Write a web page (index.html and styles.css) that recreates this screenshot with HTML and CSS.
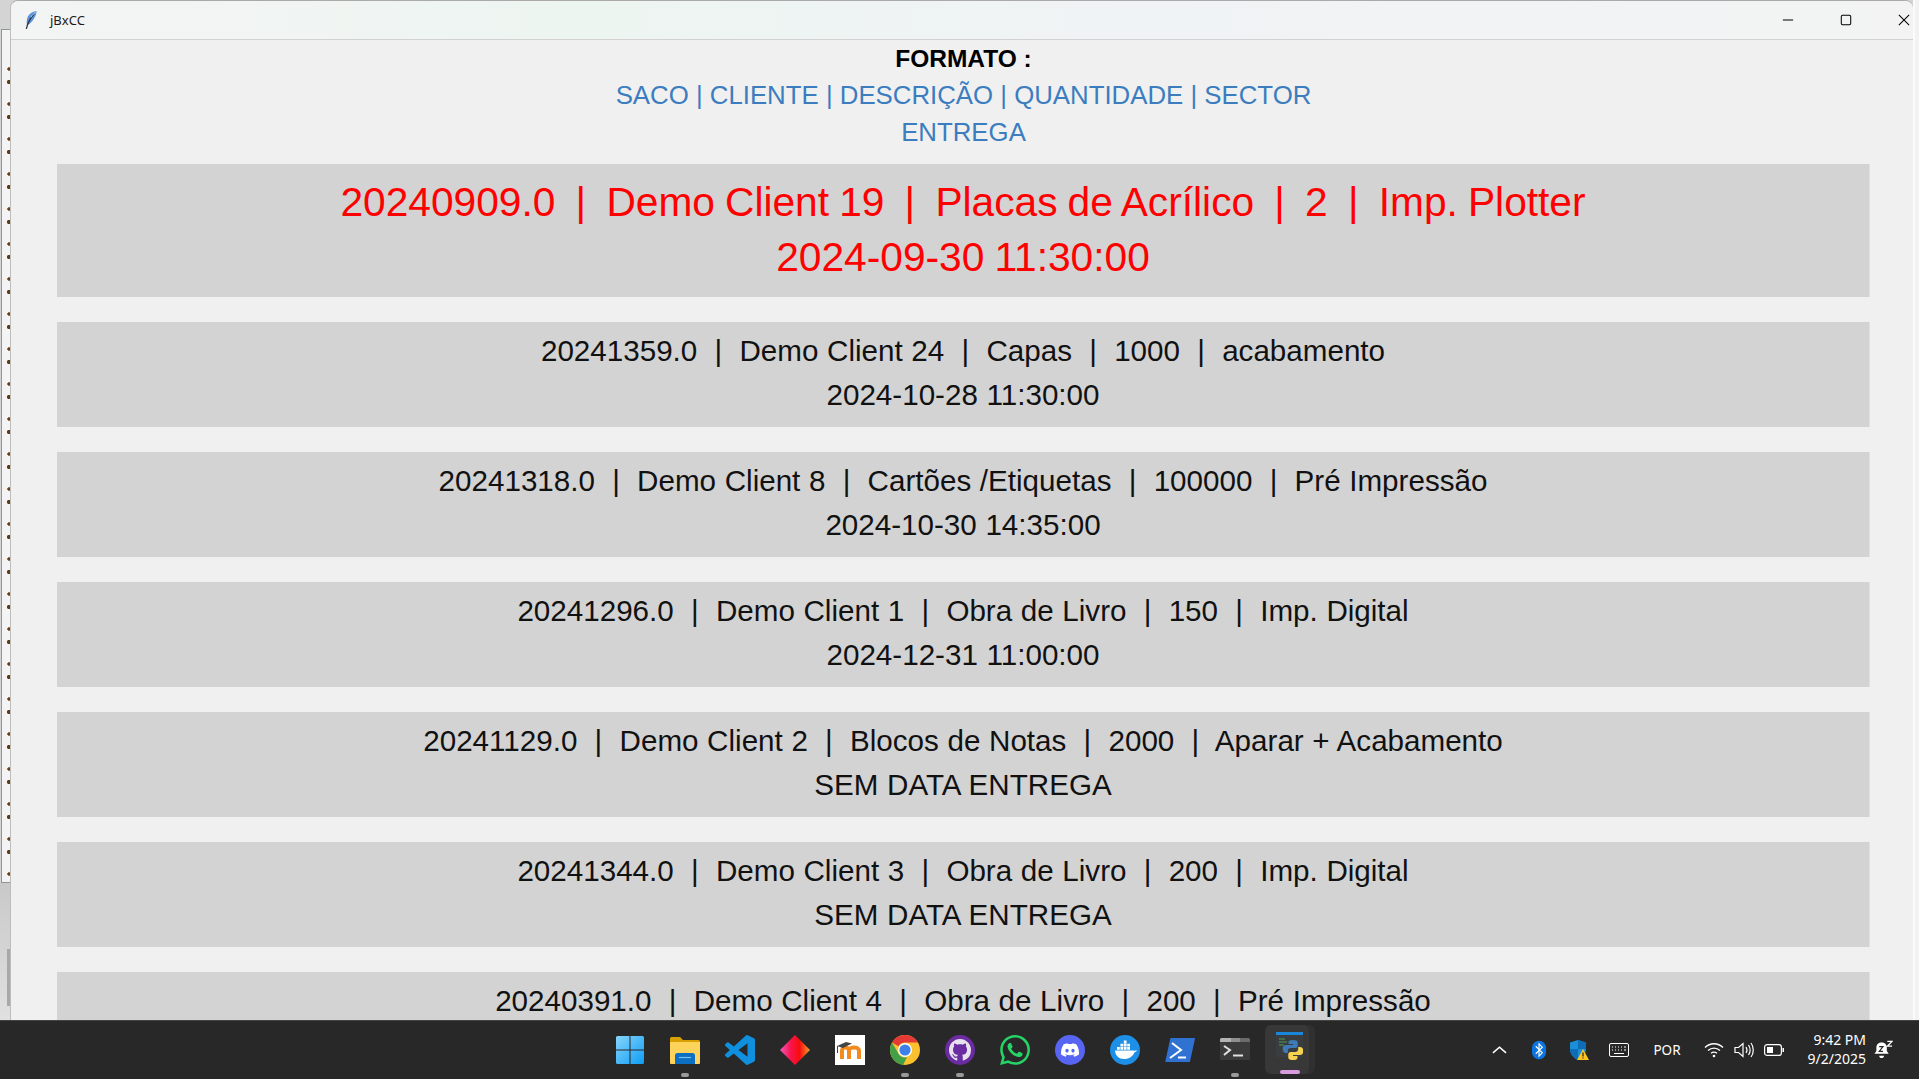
FILE: index.html
```html
<!DOCTYPE html>
<html lang="en">
<head>
    <meta charset="UTF-8">
    <meta name="viewport" content="width=device-width, initial-scale=1.0">
    <title>jBxCC</title>
    <link rel="stylesheet" href="styles.css">
</head>
<body>
    <div class="desktop">
        <div class="behind">
            <div class="behind-list"><div class="behind-dots"></div></div>
            <div class="behind-rest"><div class="behind-scroll"></div></div>
        </div>

        <div class="window">
            <div class="titlebar">
                <div class="title-left">
                    <svg class="feather" viewBox="0 0 14 20">
                        <path d="M13.500 .5C9.500 .5 5 3 3.500 8c-.8 3-.8 5-.3 7.500 3-1 6-4 7.800-7.500 1.500-2.500 2.500-5 2.500-7.500z" fill="#5b93dc"/>
                        <path d="M11 3.500C8 6.500 4.500 11 2.500 19.500" stroke="#2b3447" stroke-width="1.400" fill="none"/>
                        <path d="M12.500 2c-2 1-4 3-5 5" stroke="#b7d4f5" stroke-width="1" fill="none"/>
                    </svg>
                    <span class="title-text">jBxCC</span>
                </div>
                <div class="title-buttons">
                    <div class="title-btn"><svg viewBox="0 0 14 14"><path d="M1 7h12" stroke="#000" stroke-width="1.200" fill="none"/></svg></div>
                    <div class="title-btn"><svg viewBox="0 0 14 14"><rect x="1.500" y="1.500" width="11" height="11" rx="1.500" stroke="#000" stroke-width="1.200" fill="none"/></svg></div>
                    <div class="title-btn"><svg viewBox="0 0 14 14"><path d="M1 1l12 12M13 1L1 13" stroke="#000" stroke-width="1.200" fill="none"/></svg></div>
                </div>
            </div>

            <div class="content">
                <div class="format">
                    <div class="format-title">FORMATO :</div>
                    <div class="format-fields">SACO | CLIENTE | DESCRIÇÃO | QUANTIDADE | SECTOR</div>
                    <div class="format-fields">ENTREGA</div>
                </div>

                <div class="jobs">
                    <div class="job job-urgent">
                        <div>20240909.0  |  Demo Client 19  |  Placas de Acrílico  |  2  |  Imp. Plotter</div>
                        <div>2024-09-30 11:30:00</div>
                    </div>
                    <div class="job">
                        <div>20241359.0  |  Demo Client 24  |  Capas  |  1000  |  acabamento</div>
                        <div>2024-10-28 11:30:00</div>
                    </div>
                    <div class="job">
                        <div>20241318.0  |  Demo Client 8  |  Cartões /Etiquetas  |  100000  |  Pré Impressão</div>
                        <div>2024-10-30 14:35:00</div>
                    </div>
                    <div class="job">
                        <div>20241296.0  |  Demo Client 1  |  Obra de Livro  |  150  |  Imp. Digital</div>
                        <div>2024-12-31 11:00:00</div>
                    </div>
                    <div class="job">
                        <div>20241129.0  |  Demo Client 2  |  Blocos de Notas  |  2000  |  Aparar + Acabamento</div>
                        <div>SEM DATA ENTREGA</div>
                    </div>
                    <div class="job">
                        <div>20241344.0  |  Demo Client 3  |  Obra de Livro  |  200  |  Imp. Digital</div>
                        <div>SEM DATA ENTREGA</div>
                    </div>
                    <div class="job">
                        <div>20240391.0  |  Demo Client 4  |  Obra de Livro  |  200  |  Pré Impressão</div>
                    </div>
                </div>
            </div>
        </div>

        <div class="edge"></div>
    </div>

    <div class="taskbar">
        <div class="task-spacer"></div>
        <div class="task-icons">
            <!-- start -->
            <div class="task-icon">
                <svg viewBox="0 0 30 30">
                    <defs>
                        <linearGradient id="winBlue" x1="0" y1="0" x2="1" y2="1"><stop offset="0" stop-color="#86d6fb"/><stop offset="1" stop-color="#0f9cf5"/></linearGradient>
                    </defs>
                    <path d="M1 2.500A1.500 1.500 0 0 1 2.500 1H14.500V14.500H1zM15.500 1H27.500A1.500 1.500 0 0 1 29 2.500V14.500H15.500zM1 15.500H14.500V29H2.500A1.500 1.500 0 0 1 1 27.500zM15.500 15.500H29V27.500A1.500 1.500 0 0 1 27.500 29H15.500z" fill="url(#winBlue)"/>
                </svg>
            </div>
            <!-- explorer -->
            <div class="task-icon running">
                <svg viewBox="0 0 30 30">
                    <path d="M0 3.500A1.500 1.500 0 0 1 1.500 2H10l3 3h15.500A1.500 1.500 0 0 1 30 6.500V10H0z" fill="#d9a100"/>
                    <path d="M0 7h30v21a1 1 0 0 1-1 1H1a1 1 0 0 1-1-1z" fill="#fdd35c"/>
                    <path d="M5 20.500A2.500 2.500 0 0 1 7.500 18h15a2.500 2.500 0 0 1 2.500 2.500V29H5z" fill="#0c6fc4"/>
                    <path d="M9 22.500h12" stroke="#7cc0f2" stroke-width="1.200"/>
                </svg>
            </div>
            <!-- vscode -->
            <div class="task-icon">
                <svg viewBox="0 0 24 24">
                    <path d="M23.150 2.587L18.210.21a1.494 1.494 0 0 0-1.705.29l-9.460 8.630-4.120-3.128a.999.999 0 0 0-1.276.057L.327 7.261A1 1 0 0 0 .326 8.740L3.899 12 .326 15.260a1 1 0 0 0 .001 1.479L1.650 17.940a.999.999 0 0 0 1.276.057l4.120-3.128 9.460 8.630a1.492 1.492 0 0 0 1.704.29l4.942-2.377A1.500 1.500 0 0 0 24 20.060V3.939a1.500 1.500 0 0 0-.85-1.352zm-5.146 14.861L10.826 12l7.178-5.448v10.896z" fill="#0f8fdd"/>
                </svg>
            </div>
            <!-- diamond app -->
            <div class="task-icon">
                <svg viewBox="0 0 30 30">
                    <defs>
                        <linearGradient id="gem" x1="0" y1="0" x2="1" y2="0"><stop offset="0" stop-color="#f45bc0"/><stop offset=".35" stop-color="#f7144e"/><stop offset=".65" stop-color="#f90d0d"/><stop offset="1" stop-color="#f5a030"/></linearGradient>
                    </defs>
                    <path d="M15 0l15 15-15 15L0 15z" fill="url(#gem)"/>
                </svg>
            </div>
            <!-- moodle -->
            <div class="task-icon">
                <svg viewBox="0 0 30 30">
                    <rect width="30" height="30" fill="#fff"/>
                    <path d="M7 24V15.500c0-4 7-4 7 0V24M14 15.500c0-4 10-4 10 0V24" stroke="#f28a1e" stroke-width="4" fill="none"/>
                    <path d="M2 11l9-4 6 1.500-9 4.500z" fill="#444"/>
                    <path d="M2.500 11v7" stroke="#444"/>
                </svg>
            </div>
            <!-- chrome -->
            <div class="task-icon running">
                <svg viewBox="0 0 30 30">
                    <circle cx="15" cy="15" r="15" fill="#fbc02d"/>
                    <path d="M15 0a15 15 0 0 1 13 7.500H15a7.500 7.500 0 0 0-6.500 3.750L2 7.500A15 15 0 0 1 15 0z" fill="#e53935"/>
                    <path d="M2 7.500L8.500 18.750A7.500 7.500 0 0 0 17 22.200L13 29.900A15 15 0 0 1 2 7.500z" fill="#43a047"/>
                    <circle cx="15" cy="15" r="7" fill="#fff"/>
                    <circle cx="15" cy="15" r="5.600" fill="#3f7fe8"/>
                </svg>
            </div>
            <!-- github desktop -->
            <div class="task-icon running">
                <svg viewBox="0 0 30 30">
                    <circle cx="15" cy="15" r="15" fill="#6a2ca0"/>
                    <svg x="4" y="4" width="22" height="22" viewBox="0 0 16 16">
                        <path d="M8 0C3.580 0 0 3.580 0 8c0 3.540 2.290 6.530 5.470 7.590.4.070.55-.17.55-.38 0-.19-.01-.82-.01-1.490-2.010.37-2.530-.49-2.690-.94-.09-.23-.48-.94-.82-1.130-.28-.15-.68-.52-.01-.53.63-.01 1.080.58 1.230.82.720 1.210 1.870.87 2.330.66.070-.52.280-.87.510-1.070-1.780-.2-3.640-.89-3.640-3.950 0-.87.310-1.590.820-2.150-.08-.2-.36-1.020.080-2.120 0 0 .67-.21 2.200.82.640-.18 1.320-.27 2-.27.680 0 1.360.09 2 .27 1.530-1.040 2.200-.82 2.200-.82.440 1.100.160 1.920.080 2.120.510.560.820 1.270.820 2.150 0 3.070-1.870 3.750-3.650 3.950.290.250.540.730.540 1.480 0 1.070-.01 1.930-.01 2.200 0 .21.150.46.550.38A8.013 8.013 0 0 0 16 8c0-4.420-3.580-8-8-8z" fill="#e8e2ee"/>
                    </svg>
                </svg>
            </div>
            <!-- whatsapp -->
            <div class="task-icon">
                <svg viewBox="0 0 24 24">
                    <path d="M17.472 14.382c-.297-.149-1.758-.867-2.030-.967-.273-.099-.471-.148-.67.150-.197.297-.767.966-.94 1.164-.173.199-.347.223-.644.075-.297-.15-1.255-.463-2.390-1.475-.883-.788-1.480-1.761-1.653-2.059-.173-.297-.018-.458.130-.606.134-.133.298-.347.446-.52.149-.174.198-.298.298-.497.099-.198.050-.371-.025-.52-.075-.149-.669-1.612-.916-2.207-.242-.579-.487-.5-.669-.51-.173-.008-.371-.01-.57-.01-.198 0-.52.074-.792.372-.272.297-1.040 1.016-1.040 2.479 0 1.462 1.065 2.875 1.213 3.074.149.198 2.096 3.200 5.077 4.487.709.306 1.262.489 1.694.625.712.227 1.360.195 1.871.118.571-.085 1.758-.719 2.006-1.413.248-.694.248-1.289.173-1.413-.074-.124-.272-.198-.57-.347m-5.421 7.403h-.004a9.870 9.870 0 0 1-5.031-1.378l-.361-.214-3.741.982.998-3.648-.235-.374a9.860 9.860 0 0 1-1.510-5.260c.001-5.450 4.436-9.884 9.888-9.884 2.640 0 5.122 1.030 6.988 2.898a9.825 9.825 0 0 1 2.893 6.994c-.003 5.450-4.437 9.884-9.885 9.884m8.413-18.297A11.815 11.815 0 0 0 12.050 0C5.495 0 .16 5.335.157 11.892c0 2.096.547 4.142 1.588 5.945L.057 24l6.305-1.654a11.882 11.882 0 0 0 5.683 1.448h.005c6.554 0 11.890-5.335 11.893-11.893a11.821 11.821 0 0 0-3.480-8.413z" fill="#25d366"/>
                </svg>
            </div>
            <!-- discord -->
            <div class="task-icon">
                <svg viewBox="0 0 30 30">
                    <circle cx="15" cy="15" r="15" fill="#5865f2"/>
                    <svg x="6" y="6" width="18" height="18" viewBox="0 0 24 24">
                        <path d="M20.317 4.370a19.791 19.791 0 0 0-4.885-1.515.074.074 0 0 0-.079.037c-.21.375-.444.864-.608 1.250a18.270 18.270 0 0 0-5.487 0 12.640 12.640 0 0 0-.617-1.250.077.077 0 0 0-.079-.037A19.736 19.736 0 0 0 3.677 4.370a.07.07 0 0 0-.032.027C.533 9.046-.32 13.580.099 18.057a.082.082 0 0 0 .031.057 19.900 19.900 0 0 0 5.993 3.030.078.078 0 0 0 .084-.028c.462-.63.874-1.295 1.226-1.994a.076.076 0 0 0-.041-.106 13.107 13.107 0 0 1-1.872-.892.077.077 0 0 1-.008-.128 10.200 10.200 0 0 0 .372-.292.074.074 0 0 1 .077-.01c3.928 1.793 8.180 1.793 12.062 0a.074.074 0 0 1 .078.01c.12.098.246.198.373.292a.077.077 0 0 1-.006.127 12.299 12.299 0 0 1-1.873.892.077.077 0 0 0-.041.107c.36.698.772 1.362 1.225 1.993a.076.076 0 0 0 .084.028 19.839 19.839 0 0 0 6.002-3.030.077.077 0 0 0 .032-.054c.5-5.177-.838-9.674-3.549-13.660a.061.061 0 0 0-.031-.03zM8.020 15.330c-1.183 0-2.157-1.085-2.157-2.419 0-1.333.956-2.419 2.157-2.419 1.210 0 2.176 1.096 2.157 2.420 0 1.333-.956 2.418-2.157 2.418zm7.975 0c-1.183 0-2.157-1.085-2.157-2.419 0-1.333.955-2.419 2.157-2.419 1.210 0 2.176 1.096 2.157 2.420 0 1.333-.946 2.418-2.157 2.418z" fill="#fff"/>
                    </svg>
                </svg>
            </div>
            <!-- docker -->
            <div class="task-icon">
                <svg viewBox="0 0 30 30">
                    <circle cx="15" cy="15" r="15" fill="#1d8fe6"/>
                    <path d="M5 15.500h18.500c1 .5 2.500.3 3.500-.5-.3 1-1.300 2-2.500 2.200C23 21 19.500 24 14 24c-5 0-8.500-3-9-8.500z" fill="#fff"/>
                    <path d="M7 12h2.800v2.800H7zM10.400 12h2.800v2.800h-2.800zM13.800 12h2.800v2.800h-2.800zM17.200 12H20v2.800h-2.800zM10.400 8.800h2.800v2.800h-2.800zM13.800 8.800h2.800v2.800h-2.800zM17.200 8.800H20v2.800h-2.800zM13.800 5.600h2.800v2.800h-2.800z" fill="#fff"/>
                </svg>
            </div>
            <!-- powershell -->
            <div class="task-icon">
                <svg viewBox="0 0 30 30">
                    <path d="M6 3h23.500a.5.500 0 0 1 .5.6L25 26.500a.8.800 0 0 1-.8.5H.8a.5.500 0 0 1-.5-.6L5.300 3.500A.8.800 0 0 1 6 3z" fill="#2f72d2"/>
                    <path d="M7 8l9 7-11 8" stroke="#fff" stroke-width="2" fill="none"/>
                    <path d="M13 22.500h8" stroke="#fff" stroke-width="2"/>
                </svg>
            </div>
            <!-- terminal -->
            <div class="task-icon running">
                <svg viewBox="0 0 30 30">
                    <rect y="3" width="30" height="22" rx="1.500" fill="#3b3b3b"/>
                    <path d="M0 4.500A1.500 1.500 0 0 1 1.500 3H11v4H0z" fill="#b4b4b4"/>
                    <rect x="11" y="3" width="9" height="4" fill="#8f8f8f"/>
                    <path d="M20 3h8.500A1.500 1.500 0 0 1 30 4.500V7H20z" fill="#6b6b6b"/>
                    <path d="M4 11l6 4-6 5" stroke="#e2e2e2" stroke-width="2" fill="none"/>
                    <path d="M13 20.500h10" stroke="#e2e2e2" stroke-width="2"/>
                </svg>
            </div>
            <!-- python, the active window -->
            <div class="task-icon active">
                <svg viewBox="0 0 27 28">
                    <rect width="27" height="25" fill="#3a3d40"/>
                    <rect width="27" height="3" fill="#1a86d8"/>
                    <path d="M3 7h6M3 10h8M3 13h5" stroke="#4c9a55"/>
                    <path d="M17 8c-3 0-4.500 .7-4.500 2.300V12H17v1H10c-2 0-3.300 1.300-3.300 3.800S8 21 10 21h1.800v-2.300c0-1.500 1.300-2.700 2.800-2.700h4.800c1.300 0 2.300-1 2.300-2.300v-3.400C21.700 8.700 19.800 8 17 8z" fill="#3c7bb5"/>
                    <path d="M17 28c3 0 4.500-.7 4.500-2.300V24H17v-1h7c2 0 3.300-1.300 3.300-3.800S26 15 24 15h-1.800v2.300c0 1.500-1.300 2.700-2.800 2.700h-4.800c-1.300 0-2.300 1-2.300 2.300v3.400C12.300 27.300 14.200 28 17 28z" fill="#f7d24f"/>
                </svg>
            </div>
        </div>

        <div class="tray">
            <div class="tray-item"><svg viewBox="0 0 16 10" class="tray-chevron"><path d="M1 8l7-6 7 6" stroke="#fff" stroke-width="1.600" fill="none"/></svg></div>
            <div class="tray-item">
                <svg viewBox="0 0 16 20" class="tray-bt">
                    <rect width="15" height="20" rx="7.500" fill="#0b74de"/>
                    <path d="M4 6l7 7-3.500 3.500v-13L11 7l-7 7" stroke="#fff" stroke-width="1.200" fill="none"/>
                </svg>
            </div>
            <div class="tray-item">
                <svg viewBox="0 0 20 20" class="tray-shield">
                    <path d="M9 0l8 2.500V9c0 5-3.500 9-8 11C4.500 18 1 14 1 9V2.500z" fill="#1a8fd8"/>
                    <path d="M9 0l8 2.500V9H9zM9 9v11C4.500 18 1 14 1 9z" fill="#0f6cb6"/>
                    <path d="M14 9l6 11H8z" fill="#fdc421"/>
                    <path d="M14 12.500v4M14 17.500v1" stroke="#222" stroke-width="1.200"/>
                </svg>
            </div>
            <div class="tray-item">
                <svg viewBox="0 0 20 14" class="tray-keyboard">
                    <rect x=".5" y=".5" width="19" height="13" rx="1.500" stroke="#fff" fill="none"/>
                    <path d="M3 4h1M6 4h1M9 4h1M12 4h1M15 4h2M3 7h1M6 7h1M9 7h1M12 7h1M15 7h2M5 10.500h10" stroke="#fff"/>
                </svg>
            </div>
            <div class="tray-lang">POR</div>
            <div class="tray-status">
                <svg viewBox="0 0 20 16" class="tray-small">
                    <path d="M1 5.500c5-5 13-5 18 0M4 8.500c3.500-3.200 8.500-3.200 12 0M7 11.300c1.800-1.400 4.200-1.400 6 0" stroke="#fff" stroke-width="1.300" fill="none"/>
                    <circle cx="10" cy="14" r="1.300" fill="#fff"/>
                </svg>
            </div>
            <div class="tray-status">
                <svg viewBox="0 0 20 16" class="tray-small">
                    <path d="M1 5.500h3.500L9 1.500v13l-4.500-4H1z" stroke="#fff" stroke-width="1.200" fill="none"/>
                    <path d="M12 5c1.200 1.800 1.200 4.200 0 6M14.500 3c2 3 2 7 0 10M17 1c3 4 3 10 0 14" stroke="#fff" stroke-width="1.200" fill="none"/>
                </svg>
            </div>
            <div class="tray-status">
                <svg viewBox="0 0 20 12" class="tray-small">
                    <rect x=".6" y=".6" width="16.800" height="10.800" rx="2.500" stroke="#fff" stroke-width="1.200" fill="none"/>
                    <rect x="3" y="3" width="6" height="6" fill="#fff"/>
                    <rect x="18.500" y="4" width="1.500" height="4" fill="#fff"/>
                </svg>
            </div>
            <div class="clock">
                <div>9:42 PM</div>
                <div>9/2/2025</div>
            </div>
            <div class="tray-item tray-bell-box">
                <svg viewBox="0 0 20 20" class="tray-bell">
                    <path d="M8 2c3 0 5.500 2 5.500 5.500V11l2 3H.5l2-3V7.500C2.500 4 5 2 8 2z" fill="#fff"/>
                    <path d="M5.500 16h5c0 1.500-1 2.500-2.500 2.500S5.500 17.500 5.500 16z" fill="#fff"/>
                    <path d="M5.500 6.500h4l-4 5h4" stroke="#262626" stroke-width="1.200" fill="none"/>
                    <path d="M14 1h5l-5 5h5" stroke="#fff" stroke-width="1.300" fill="none"/>
                </svg>
            </div>
        </div>
    </div>
</body>
</html>
```

FILE: styles.css
```css
* {
    box-sizing: border-box;
}
html, body {
    margin: 0;
    padding: 0;
    height: 100%;
    overflow: hidden;
}
body {
    font-family: 'Liberation Sans', Arial, sans-serif;
    display: flex;
    flex-direction: column;
    background-color: #d4d4d4;
}
.desktop {
    display: flex;
    height: 1020px;
    overflow: hidden;
}

/* the other window peeking out on the left */
.behind {
    width: 10px;
    display: flex;
    flex-direction: column;
    padding-top: 29px;
}
.behind-list {
    height: 854px;
    margin-left: 1px;
    border: 1px solid #8f959c;
    border-right: none;
    background-color: #f4f4f4;
    overflow: hidden;
}
.behind-dots {
    height: 100%;
    margin-top: 33px;
    background-image:
        radial-gradient(circle at 7px 6px, #6b3d10 1.4px, transparent 2px),
        radial-gradient(circle at 7px 19px, #5f3a12 1.8px, transparent 2.4px);
    background-size: 9px 35px;
}
.behind-rest {
    flex: 1;
    padding: 66px 0 0 7px;
    background: linear-gradient(#c9c9c9, #e0e0e0);
}
.behind-scroll {
    width: 3px;
    height: 57px;
    background-color: #a8a8a8;
}

.window {
    width: 1903px;
    display: flex;
    flex-direction: column;
    background: #f0f0f0;
    border-top: 1px solid #a9a9a9;
    border-left: 1px solid #bdbdbd;
    border-top-left-radius: 8px;
    border-top-right-radius: 8px;
    overflow: hidden;
}
.titlebar {
    height: 39px;
    flex-shrink: 0;
    display: flex;
    justify-content: space-between;
    background: linear-gradient(90deg, #f3f4f4, #edf5f1 30%, #f0f3f5 60%, #f3f3f3);
    border-bottom: 1px solid #d2d2d2;
}
.title-left {
    display: flex;
    align-items: center;
    padding-left: 13px;
}
.feather {
    width: 13px;
    height: 20px;
    margin-top: -1px;
}
.title-text {
    margin-left: 13px;
    font-family: 'Noto Sans', sans-serif;
    font-size: 13px;
    color: #1a1a1a;
}
.title-buttons {
    display: flex;
    margin-right: -20px;
}
.title-btn {
    width: 58px;
    display: flex;
    align-items: center;
    justify-content: center;
}
.title-btn svg {
    width: 12px;
    height: 12px;
}

.content {
    flex: 1;
    overflow: hidden;
    padding: 0 43px 0 46px;
}
.format {
    text-align: center;
    height: 124px;
    padding-top: 4px;
}
.format-title {
    font-size: 24.5px;
    font-weight: bold;
    line-height: 30px;
    color: #000000;
}
.format-fields {
    font-size: 25.8px;
    line-height: 37px;
    color: #3b7dbf;
}
.format-title + .format-fields {
    margin-top: 3px;
}
.jobs {
    display: flex;
    flex-direction: column;
    gap: 25px;
}
.job {
    flex-shrink: 0;
    height: 105px;
    padding-top: 7px;
    background-color: #d3d3d3;
    border-right: 1px solid #e0e0e0;
    text-align: center;
    font-size: 29.6px;
    word-spacing: .4px;
    line-height: 44px;
    color: #111111;
}
.job div {
    white-space: pre-wrap;
}
.job-urgent {
    height: 133px;
    padding-top: 11px;
    font-size: 40.7px;
    word-spacing: -1.2px;
    line-height: 55px;
    color: #ff0000;
}
.edge {
    width: 6px;
    background: #f2f2f2;
    border-left: 2px solid #fbfbfb;
}

.taskbar {
    height: 59px;
    flex-shrink: 0;
    display: grid;
    grid-template-columns: 1fr auto 1fr;
    background-color: #282828;
    border-top: 1px solid #444444;
}
.task-icons {
    display: flex;
    align-items: center;
}
.task-icon {
    position: relative;
    width: 55px;
    height: 58px;
    display: flex;
    align-items: center;
    justify-content: center;
}
.task-icon > svg {
    position: relative;
    width: 30px;
    height: 30px;
}
.task-icon.running::after {
    content: "";
    position: absolute;
    left: 24px;
    bottom: 2px;
    width: 8px;
    height: 4px;
    border-radius: 2px;
    background-color: #9a9a9a;
}
.task-icon.active::before {
    content: "";
    position: absolute;
    left: 3px;
    top: 4px;
    width: 44px;
    height: 49px;
    background-color: #383838;
    border-radius: 6px;
    box-shadow: 6px 0 0 #303030;
}
.task-icon.active > svg {
    width: 27px;
    height: 28px;
    margin-top: -8px;
}
.task-icon.active::after {
    content: "";
    position: absolute;
    left: 18px;
    bottom: 5px;
    width: 20px;
    height: 4px;
    border-radius: 2px;
    background-color: #d99be0;
}
.tray {
    justify-self: end;
    display: flex;
    align-items: center;
    padding-right: 19px;
    color: #ffffff;
}
.tray-item {
    width: 40px;
    display: flex;
    align-items: center;
    justify-content: center;
}
.tray-chevron {
    width: 15px;
    height: 10px;
}
.tray-bt {
    width: 15px;
    height: 20px;
}
.tray-shield {
    width: 20px;
    height: 20px;
}
.tray-keyboard {
    width: 20px;
    height: 14px;
}
.tray-lang {
    width: 56px;
    margin-right: 4px;
    text-align: center;
    font-family: 'Noto Sans', sans-serif;
    font-size: 13.5px;
}
.tray-status {
    width: 30px;
    display: flex;
    align-items: center;
    justify-content: center;
}
.tray-small {
    width: 20px;
    height: 16px;
}
.clock {
    width: 77px;
    margin-top: -2px;
    text-align: right;
    font-family: 'Noto Sans', sans-serif;
    font-size: 14px;
    line-height: 19px;
}
.tray-bell-box {
    width: 34px;
}
.tray-bell {
    width: 19px;
    height: 20px;
}
```
